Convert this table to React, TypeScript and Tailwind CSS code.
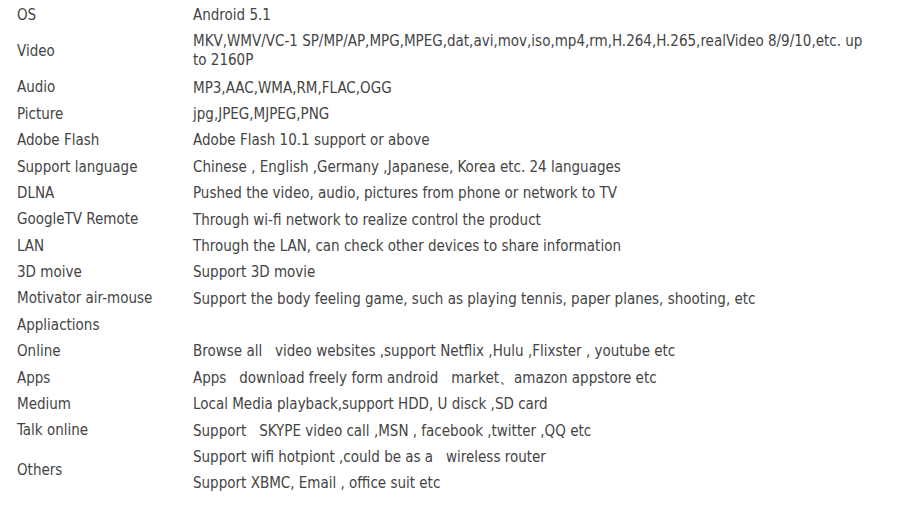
import React from 'react';

type Row = { label: string; values: React.ReactNode[]; tall?: boolean };

const rows: Row[] = [
  { label: 'OS', values: ['Android 5.1'] },
  {
    label: 'Video',
    tall: true,
    values: [
      <>
        MKV,WMV/VC-1 SP/MP/AP,MPG,MPEG,dat,avi,mov,iso,mp4,rm,H.264,H.265,realVideo 8/9/10,etc. up
        <br />
        to 2160P
      </>,
    ],
  },
  { label: 'Audio', values: ['MP3,AAC,WMA,RM,FLAC,OGG'] },
  { label: 'Picture', values: ['jpg,JPEG,MJPEG,PNG'] },
  { label: 'Adobe Flash', values: ['Adobe Flash 10.1 support or above'] },
  { label: 'Support language', values: ['Chinese , English ,Germany ,Japanese, Korea etc. 24 languages'] },
  { label: 'DLNA', values: ['Pushed the video, audio, pictures from phone or network to TV'] },
  { label: 'GoogleTV Remote', values: ['Through wi-fi network to realize control the product'] },
  { label: 'LAN', values: ['Through the LAN, can check other devices to share information'] },
  { label: '3D moive', values: ['Support 3D movie'] },
  { label: 'Motivator air-mouse', values: ['Support the body feeling game, such as playing tennis, paper planes, shooting, etc'] },
  { label: 'Appliactions', values: [''] },
  { label: 'Online', values: ['Browse all \u00a0\u00a0video websites ,support Netflix ,Hulu ,Flixster , youtube etc'] },
  { label: 'Apps', values: ['Apps \u00a0\u00a0download freely form android \u00a0\u00a0market\u3001amazon appstore etc'] },
  { label: 'Medium', values: ['Local Media playback,support HDD, U disck ,SD card'] },
  { label: 'Talk online', values: ['Support \u00a0\u00a0SKYPE video call ,MSN , facebook ,twitter ,QQ etc'] },
  {
    label: 'Others',
    values: ['Support wifi hotpiont ,could be as a \u00a0\u00a0wireless router', 'Support XBMC, Email , office suit etc'],
  },
];

export default function App() {
  return (
    <div
      className="w-[900px] h-[515px] bg-white text-[#444] text-[15px] pt-[2px] overflow-hidden"
      style={{ fontFamily: '"DejaVu Sans Condensed", "DejaVu Sans", sans-serif' }}
    >
      {rows.map((r) => (
        <div key={r.label} className="flex">
          <div className="w-[193px] shrink-0 pl-[17px] flex items-center">{r.label}</div>
          <div className="flex-1 flex flex-col">
            {r.values.map((v, i) => (
              <div
                key={i}
                className={
                  r.tall
                    ? 'h-[46px] flex items-center leading-[19px]'
                    : 'h-[26.4px] flex items-center leading-[18px]'
                }
              >
                <div className="whitespace-nowrap">{v}</div>
              </div>
            ))}
          </div>
        </div>
      ))}
    </div>
  );
}
